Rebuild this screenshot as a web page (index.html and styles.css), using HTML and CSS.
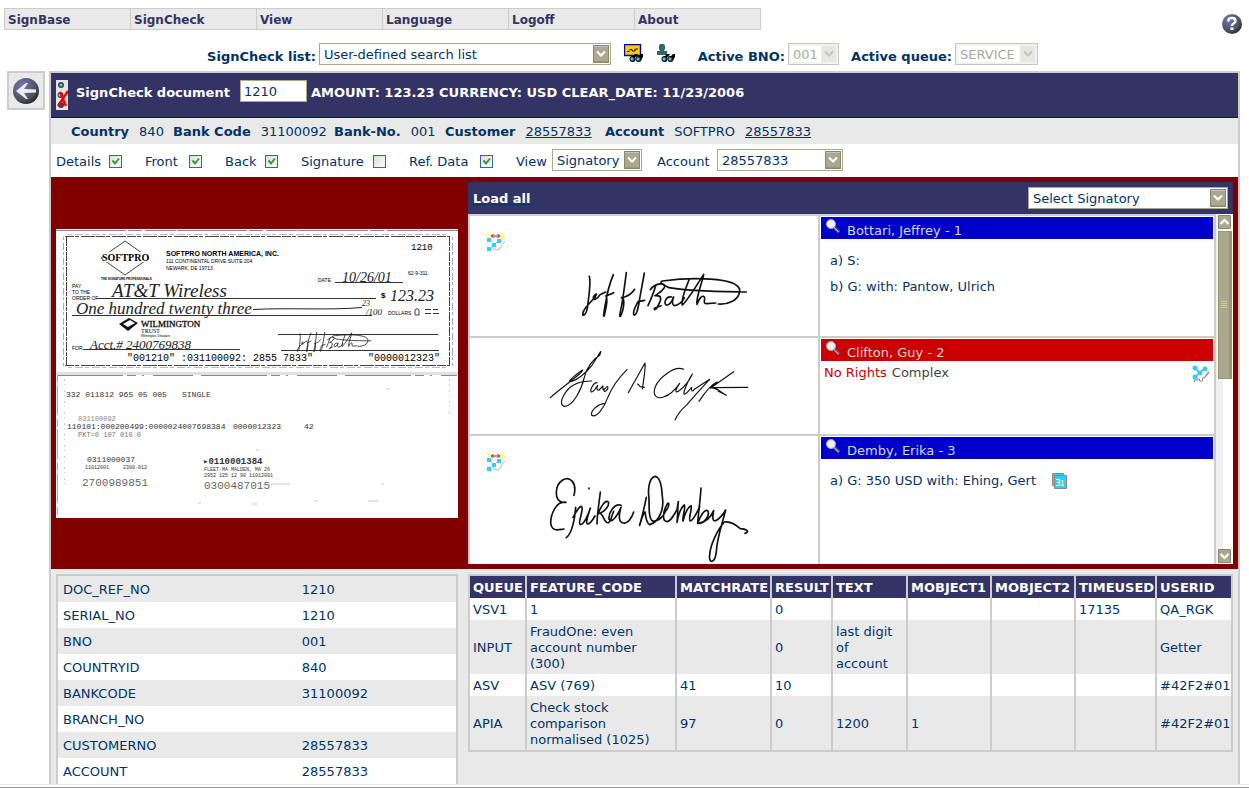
FILE: index.html
```html
<!DOCTYPE html>
<html lang="en">
<head>
<meta charset="utf-8">
<title>SignCheck document</title>
<link rel="stylesheet" href="styles.css">
</head>
<body>
<svg class="defs" width="0" height="0" aria-hidden="true">
  <defs>
    <radialGradient id="ball" cx="35%" cy="30%" r="75%"><stop offset="0" stop-color="#7478ac"/><stop offset=".5" stop-color="#5a5c80"/><stop offset=".75" stop-color="#4d4f54"/><stop offset="1" stop-color="#22242a"/></radialGradient>
    <symbol id="glasses" viewBox="0 0 14 8">
      <path d="M3 3 6 0h3l-2 3zM9 3l3-3h2v3l-2 3z" fill="#000"/><circle cx="3.500" cy="5" r="3" fill="#000"/><circle cx="9.500" cy="5" r="3" fill="#000"/><circle cx="3" cy="5" r="1.700" fill="#3cf"/><circle cx="9" cy="5" r="1.700" fill="#3cf"/>
    </symbol>
    <symbol id="nodes" viewBox="0 0 18 18">
      <path d="M3 3 8 8M12 4 3 12M13 12l4-5" stroke="#888" stroke-width="1.300" fill="none"/>
      <path d="M2.500 17v-2h3v-1h2v2h3v-3h2v-1" stroke="#888" fill="none"/>
      <circle cx="3" cy="3" r="2.500" fill="#3cf"/><circle cx="13" cy="4" r="2.500" fill="#3cf"/><circle cx="8" cy="8" r="2.500" fill="#3cf"/><circle cx="3" cy="12" r="2.500" fill="#3cf"/>
    </symbol>
    <symbol id="compare" viewBox="0 0 20 20">
      <circle cx="3" cy="3" r="2.500" fill="#ff9"/><circle cx="16" cy="3" r="2.500" fill="#ff9"/><path d="M1 4h5v3H1zM14 4h5v3h-5z" fill="#ff9"/>
      <path d="M5 4h9M7.500 2 5.500 4l2 2M11.500 2l2 2-2 2" stroke="#c03" fill="none"/>
      <path d="M3 8l5 5 5-5M8 13l-5 4" stroke="#bbb" fill="none"/><path d="M7 18v-1h3v1h3v-2h2v-2l4-5" stroke="#bbb" fill="none"/>
      <path d="M1 6h4v4H1zM11 7h4v4h-4zM6 11h4v4H6zM1 15h4v4H1z" fill="#3cf"/>
    </symbol>
    <symbol id="lens" viewBox="0 0 16 14">
      <path d="M9 8l5 5" stroke="#99a" stroke-width="2.500"/><path d="M10 8l5 5" stroke="#446" stroke-width="1"/><circle cx="6" cy="5" r="4.500" fill="#eee" stroke="#aab" stroke-width="1"/>
    </symbol>
    <symbol id="jeff" viewBox="240 265 624 159">
      <g fill="none" stroke="#111" stroke-width="5" stroke-linecap="round" stroke-linejoin="round">
        <path d="M373 290c6 22-3 68-6 96-6 25-18 26-12 10 8-18 27-32 36-45 9-14-3-7-6 2-3 11 12 7 20-8l17-8M445 285c-8 20-18 52-22 78-5 26-10 56-5 44 4-18 12-46 6-56-6-6 14-4 22-12M484 279c-4 30-9 70-14 98-6 28-8 40-2 30 8-16 10-40 7-50l-6-3c22-2 34-16 40-25M538 280c-5 30-12 62-16 90-5 28-10 38-15 36-6-8 4-24 12-40l20-4"/>
        <path d="M572 318c-6 22-14 40-23 60M556 330c16-22 50-22 42-6-8 14-20 18-28 24 24-2 18 14 10 28-4 14-14 18-12 10l20-8M620 352c-20-4-24 22-16 24 10 2 18-14 22-24-6 14-4 24 2 26 10 0 26-12 30-24M672 300c-8 24-26 60-20 76 10-8 34-44 64-92-4 24-24 70-20 90 6-16 16-30 22-22 4 8-6 18 6 20l28-2"/>
        <path d="M760 373c28 2 64-10 64-42-6-40-150-38-232-27-12 4 4 12 20 20 60 12 168 12 232 13"/>
      </g>
    </symbol>
  </defs>
</svg>

<header class="top">
  <nav class="menu">
    <a href="#">SignBase</a><a href="#">SignCheck</a><a href="#">View</a><a href="#">Language</a><a href="#">Logoff</a><a href="#">About</a>
  </nav>
  <button class="plain help" aria-label="Help">
    <svg width="22" height="22" viewBox="0 0 22 22"><circle cx="11" cy="11" r="10" fill="url(#ball)"/><path d="M7.500 8.500V7q0-2 3.500-2t3.500 3q0 1.500-2 2.500-1.500.7-1.500 2.500" fill="none" stroke="#fff" stroke-width="2.400"/><path d="M9.500 14.500h3V17h-3z" fill="#fff"/></svg>
  </button>
</header>

<div class="filters">
  <label class="strong list-label" for="list">SignCheck list:</label>
  <select id="list" class="w-list"><option>User-defined search list</option></select>
  <div class="tools">
    <button class="plain" aria-label="Find signature"><svg width="20" height="18" viewBox="0 0 20 18"><path d="M.500.500h16v11H.500z" fill="#fc0" stroke="#009" stroke-width="1.400"/><path d="M3 7.500h2l1-2h2v1.500h3v-2h3" fill="none" stroke="#009"/><use href="#glasses" x="5" y="10" width="14" height="8"/></svg></button>
    <button class="plain" aria-label="Find customer"><svg width="20" height="20" viewBox="0 0 20 20"><path d="M4 1h4q2 2 1 5l-1 2h3v4H1V8h3L3 6q-1-3 1-5z" fill="#366"/><use href="#glasses" x="5" y="11" width="14" height="8"/></svg></button>
  </div>
  <label class="strong bno-label" for="bno">Active BNO:</label>
  <select id="bno" class="w-bno" disabled><option>001</option></select>
  <label class="strong queue-label" for="queue">Active queue:</label>
  <select id="queue" class="w-queue" disabled><option>SERVICE</option></select>
</div>

<div class="stage">
  <button class="back" aria-label="Back">
    <svg width="28" height="28" viewBox="0 0 28 28"><circle cx="14" cy="14" r="13" fill="url(#ball)"/><path d="M4 14l10-8h2l-4 6 12 .5v3L12 16l4 6h-2z" fill="#eee"/></svg>
  </button>

  <main class="panel">
    <div class="titlebar">
      <svg width="12" height="30" viewBox="0 0 12 30"><path d="M0 0h12v30H0z" fill="#e4e4e4"/><circle cx="5" cy="5" r="3" fill="#345"/><circle cx="5" cy="5" r="1.500" fill="#6c9"/><circle cx="4.500" cy="15" r="3" fill="#345"/><circle cx="4" cy="15" r="1.500" fill="#fc3"/><circle cx="5" cy="25" r="3" fill="#345"/><path d="M4 12l6 14M12 11 2 26" stroke="#f00" stroke-width="2.500"/></svg>
      <label class="doc-label" for="doc">SignCheck document</label>
      <input id="doc" class="doc" type="text" value="1210">
      <span>AMOUNT: 123.23 CURRENCY: USD CLEAR_DATE: 11/23/2006</span>
    </div>

    <dl class="info">
      <div class="i-country"><dt>Country</dt><dd>840</dd></div>
      <div class="i-code"><dt>Bank Code</dt><dd>31100092</dd></div>
      <div class="i-no"><dt>Bank-No.</dt><dd>001</dd></div>
      <div class="i-cust"><dt>Customer</dt><dd><a href="#">28557833</a></dd></div>
      <div><dt>Account</dt><dd>SOFTPRO</dd><dd><a href="#">28557833</a></dd></div>
    </dl>

    <form class="options">
      <label class="o-details">Details <input type="checkbox" checked></label>
      <label class="o-front">Front <input type="checkbox" checked></label>
      <label class="o-back">Back <input type="checkbox" checked></label>
      <label class="o-sig">Signature <input type="checkbox"></label>
      <label class="o-ref">Ref. Data <input type="checkbox" checked></label>
      <label class="o-view">View <select class="w-view"><option>Signatory</option></select></label>
      <label class="o-acc">Account <select class="w-acc"><option>28557833</option></select></label>
    </form>

    <section class="compare">
      <svg class="check" viewBox="0 0 402 289" role="img" aria-label="Check front and back">
        <path d="M0 0h402v289H0z" fill="#fefefe"/>
        <path d="M0 1.500h402" stroke="#888" stroke-dasharray="70 2 14 3 31 1"/>
        <g fill="none" stroke="#444">
          <path d="M9 7.500h385M9 136.500h385" stroke-dasharray="9 1 4 2 14 1"/><path d="M12 5.500h380M12 138.500h380" stroke="#bbb" stroke-dasharray="4 3 8 2"/>
          <path d="M10.500 8v129M393.500 8v129" stroke-dasharray="9 1 4 1"/><path d="M7.500 8v129M396.500 8v129" stroke="#aaa" stroke-dasharray="3 3 7 2"/>
          <path d="M69 12 93 29 69 46 45 29z"/>
        </g>
        <path d="M47 23h44v10H47z" fill="#fefefe"/>
        <g class="serif bold"><text x="46" y="32" font-size="10">SOFTPRO</text></g>
        <g class="serif"><text x="85" y="98" font-size="9" stroke="#111" stroke-width=".3">WILMINGTON</text><text x="85" y="104" font-size="6">TRUST</text></g>
        <g class="sans">
          <text class="bold" x="110" y="27" font-size="7">SOFTPRO NORTH AMERICA, INC.</text>
          <text x="110" y="34" font-size="5">111 CONTINENTAL DRIVE SUITE 204</text>
          <text x="110" y="41" font-size="5">NEWARK, DE 19713</text>
          <text class="bold" x="45" y="51" font-size="3">THE SIGNATURE PROFESSIONALS</text>
          <text x="262" y="53" font-size="5">DATE</text><text x="352" y="46" font-size="5">62-9-311</text>
          <text x="16" y="59" font-size="5">PAY</text><text x="16" y="65" font-size="5">TO THE</text><text x="16" y="71" font-size="5">ORDER OF</text>
          <text class="bold" x="325" y="69" font-size="8">$</text><text x="332" y="86" font-size="5">DOLLARS</text>
          <text x="85" y="108" font-size="3">Wilmington, Delaware</text><text x="16" y="121" font-size="5">FOR</text>
        </g>
        <g class="hand">
          <text x="286" y="53" font-size="14">10/26/01</text><text x="56" y="68" font-size="19">AT&amp;T Wireless</text>
          <text x="334" y="72" font-size="16">123.23</text><text x="20" y="85" font-size="17">One hundred twenty three</text>
          <text x="306" y="77" font-size="8">23</text><text x="310" y="86" font-size="9">/100</text>
          <text x="34" y="120" font-size="13">Acct.# 2400769838</text>
        </g>
        <path d="M279 53.500h68M40 69.500h280M16 86.500h300M27 120.500h157M222 105.500h160M225 121.500h158M369 80.500h6M377 80.500h5M369 84.500h6M377 84.500h6" stroke="#333"/>
        <path d="M197 80.500c35-2 75 1 109-2" stroke="#222" fill="none"/>
        <path d="M359 86v-5q2-3 4 0v5z" fill="none" stroke="#444"/>
        <path d="M63 95l10-6 9 5-10 8z" fill="#111"/><path d="M67 95l7-4 5 3-7 4z" fill="#fff"/>
        <use href="#jeff" x="224" y="101" width="94" height="24"/>
        <g class="mono"><text x="355" y="21" font-size="9">1210</text><text x="71" y="132" font-size="10">"001210" :031100092: 2855 7833"</text><text x="312" y="132" font-size="10">"0000012323"</text></g>
        <path d="M0 144.500h402" stroke="#e0e0e0" stroke-width="3"/><path d="M1 146.500h400" stroke="#888" stroke-dasharray="66 4 9 6 2 9 40 8"/><path d="M1.500 146v142" stroke="#aaa" stroke-dasharray="8 2 30 4"/><path d="M8.500 150v110M393.500 150v38" stroke="#ccc" stroke-dasharray="2 3 1 5"/>
        <g class="mono" fill="#333">
          <text x="10" y="168" font-size="8">332 011812 965 05 005</text><text x="126" y="168" font-size="8">SINGLE</text>
          <text x="22" y="192" font-size="7" fill="#888">031100092</text><text x="22" y="208" font-size="7" fill="#777">PKT=0 107 010 0</text>
          <text x="11" y="200" font-size="8">110101:000200499:0000024007698384</text><text x="177" y="200" font-size="8">0000012323</text><text x="248" y="200" font-size="8">42</text>
          <text x="31" y="233" font-size="8">0311000037</text><text x="29" y="240" font-size="5">11012001</text><text x="67" y="240" font-size="5">2380-012</text>
          <text x="26" y="257" font-size="11" fill="#666">2700989851</text>
          <text class="bold" x="147" y="235" font-size="9">▸0110001384</text><text x="148" y="242" font-size="5">FLEET-MA MALDEN, MA 26</text><text x="148" y="248" font-size="5">2952 125 12 90 11012001</text>
          <text x="148" y="260" font-size="11" fill="#666">0300487015</text>
        </g>
        <path d="M200 221h3M212 255h22M142 274h3M196 275h5M258 272h4M312 272h11M330 160h4M325 255h3" stroke="#ccc"/>
      </svg>

      <div class="signatories">
        <div class="sig-head">
          <a href="#">Load all</a>
          <select class="w-sel" aria-label="Select Signatory"><option>Select Signatory</option></select>
        </div>
        <div class="sig-body">
          <ul class="sig-list">
            <li class="r1">
              <div class="sig"><svg class="cmp"><use href="#compare"/></svg><svg class="ink" width="208" height="53" role="img" aria-label="Signature of Jeffrey Bottari"><use href="#jeff"/></svg></div>
              <div class="who"><h2><svg class="lens"><use href="#lens"/></svg>Bottari, Jeffrey - 1</h2><p class="rule">a) S:</p><p class="rule">b) G: with: Pantow, Ulrich</p></div>
            </li>
            <li class="r2">
              <div class="sig"><span class="cmp"></span><svg class="ink" width="208" height="71" viewBox="240 510 624 213" role="img" aria-label="Signature of Guy Clifton"><g fill="none" stroke="#111" stroke-width="3.500" stroke-linecap="round" stroke-linejoin="round">
                <path d="M256 653c20-18 50-40 84-68 12-10 18-20 8-12-14 10-44 34-32 32 18-4 46-24 64-48 20-28 34-60 24-31-18 10-40 36-46 66-8 34-34 90-62 87-20-12 10-54 30-64 20-12 40-12 54-12"/>
                <path d="M396 608c-12 0-24 28-16 28 8-2 14-14 18-20-4 10-2 16 4 14l12-12c-2 10 0 14 6 8 8-10 10-8 8 2M428 626c-6 12-14 10-10 0M486 569c-30 30-46 54-58 84-10 30-34 62-48 53-4-14 18-34 40-36"/>
                <path d="M490 638c14-26 34-60 50-89 2 20-4 50-8 78M518 612l8 8 12 2M656 568c-30-14-76 30-84 50-14 32 8 40 26 32 20-6 36-26 46-40-12 16-16 30-4 24 20-12 36-38 42-52-10 14-34 66-22 60 6-2 12-12 20-20-2 12 2 14 8 6l46-30c-30 32-50 54-68 76-16 14-28 28-36 46"/>
                <path d="M806 575l-68 48 110-1M702 664c20-30 40-52 54-58l-20 18c16-4 24 8 48 22l-24-12"/></g></svg></div>
              <div class="who red"><h2><svg class="lens"><use href="#lens"/></svg>Clifton, Guy - 2</h2><p class="note"><span class="deny">No Rights</span> <span>Complex</span><svg class="nodes"><use href="#nodes"/></svg></p></div>
            </li>
            <li class="r3">
              <div class="sig"><svg class="cmp"><use href="#compare"/></svg><svg class="ink" width="208" height="91" viewBox="240 879 624 273" role="img" aria-label="Signature of Erika Demby"><g fill="none" stroke="#111" stroke-width="5" stroke-linecap="round" stroke-linejoin="round">
                <path d="M327 946c10-40-14-58-34-46-24 16-26 60-2 66l12 1c-30-6-46 38-46 62 4 28 24 20 40 18"/>
                <path d="M332 982c-2 30-10 78-28 91M324 1012c12-22 22-36 26-32 8 8-14 50-4 54 12 0 26-36 30-50-6 20-16 46-8 48 8 0 16-14 22-24M372 924v2M406 936c-4 36-10 68-10 96M398 1004c10-26 24-46 32-38 4 10-10 28-26 34 10-2 14 32 26 28 8-4 10-22 16-34M468 976c-20-8-38 24-36 42 10 14 28-16 36-36-8 26-6 44 4 46 14 6 28-12 34-32"/>
                <path d="M544 952c-6 30-14 62-20 84 6-20 10-36 16-40 2 16 4 34 14 38 30-8 44-50 38-84-2-40-8-60-22-61-18 4-22 40-18 66 0 34 0 60 10 68 16 4 34-14 40-30 14-18 10-30 4-20-12 22-16 50 0 52 10 0 20-18 30-36l4-24c-2 20-2 40-4 62 4-22 12-44 22-52 4 14-6 32-4 48 6-22 14-42 24-46 4 14-10 42-2 46 8 0 20-26 28-42"/>
                <path d="M708 924c-2 36-8 76-10 106 8-22 20-44 30-38 8 12-10 40-28 38 20-2 38-18 46-38-4 20-4 32 6 30 12-6 22-18 30-32-10 40-26 84-28 124-4 38-24 38-20 10 2-30 24-76 44-98 20-4 36 10 48 20 22 2 28 10 14 14"/></g></svg></div>
              <div class="who"><h2><svg class="lens"><use href="#lens"/></svg>Demby, Erika - 3</h2><p class="rule">a) G: 350 USD with: Ehing, Gert <svg class="cal" viewBox="0 0 16 16"><path d="M.500 13V.500H12" fill="none" stroke="#888"/><path d="M1 1h11v3H4v9H1z" fill="#3cf"/><path d="M2.500 2.500h12v13h-12z" fill="#3cf" stroke="#888"/><path d="M4 6.500h3.500v6H4M5 9.500h2M9 7.500h1.500v5M9 12.500h3" fill="none" stroke="#ff9" stroke-width="1.200"/></svg></p></div>
            </li>
          </ul>
          <div class="scroll">
            <button class="plain" aria-label="Scroll up"><svg width="15" height="16" viewBox="0 0 15 16"><path d="M1.500 1.500h12v13h-12z" fill="#aca890" stroke="#887"/><path d="M3.500 10l4-4 4 4" fill="none" stroke="#fff" stroke-width="2"/></svg></button>
            <div class="thumb"><i></i></div>
            <button class="plain down" aria-label="Scroll down"><svg width="15" height="16" viewBox="0 0 15 16"><path d="M1.500 1.500h12v13h-12z" fill="#aca890" stroke="#887"/><path d="M3.500 6l4 4 4-4" fill="none" stroke="#fff" stroke-width="2"/></svg></button>
          </div>
        </div>
      </div>
    </section>

    <section class="data">
      <table class="details">
        <tr><th>DOC_REF_NO</th><td>1210</td></tr>
        <tr><th>SERIAL_NO</th><td>1210</td></tr>
        <tr><th>BNO</th><td>001</td></tr>
        <tr><th>COUNTRYID</th><td>840</td></tr>
        <tr><th>BANKCODE</th><td>31100092</td></tr>
        <tr><th>BRANCH_NO</th><td></td></tr>
        <tr><th>CUSTOMERNO</th><td>28557833</td></tr>
        <tr><th>ACCOUNT</th><td>28557833</td></tr>
      </table>
      <table class="results">
        <colgroup><col class="c1"><col class="c2"><col class="c3"><col class="c4"><col class="c5"><col class="c6"><col class="c6"><col class="c8"><col class="c9"></colgroup>
        <thead><tr><th>QUEUE</th><th>FEATURE_CODE</th><th>MATCHRATE</th><th>RESULT</th><th>TEXT</th><th>MOBJECT1</th><th>MOBJECT2</th><th>TIMEUSED</th><th>USERID</th></tr></thead>
        <tbody>
        <tr><td>VSV1</td><td>1</td><td></td><td>0</td><td></td><td></td><td></td><td>17135</td><td>QA_RGK</td></tr>
        <tr><td>INPUT</td><td>FraudOne: even account number (300)</td><td></td><td>0</td><td>last digit of account</td><td></td><td></td><td></td><td>Getter</td></tr>
        <tr><td>ASV</td><td>ASV (769)</td><td>41</td><td>10</td><td></td><td></td><td></td><td></td><td>#42F2#01</td></tr>
        <tr><td>APIA</td><td>Check stock comparison normalised (1025)</td><td>97</td><td>0</td><td>1200</td><td>1</td><td></td><td></td><td>#42F2#01</td></tr>
        </tbody>
      </table>
    </section>
  </main>
</div>
<div class="edge"></div>
</body>
</html>
```
FILE: styles.css
```css
* { box-sizing: border-box; }
body { margin: 0; background: #fff; color: #003366; font: 13px/16px Verdana, "DejaVu Sans", sans-serif; }
a { color: inherit; }
h2, p, ul, dl, dd { margin: 0; padding: 0; font-weight: normal; }
.defs { position: absolute; }
svg { display: block; flex: none; }
.plain { border: 0; padding: 0; background: none; }

.top { display: flex; justify-content: space-between; padding: 8px 6px 0 4px; height: 43px; }
.menu { display: flex; height: 22px; border: 1px solid #ccc; background: #e9e9e9; }
.menu a { width: 126px; padding: 3px; border-left: 1px solid #ccc; color: #333366; font-size: 12px; font-weight: bold; line-height: 16px; text-decoration: none; }
.menu a:first-child { width: 125px; border-left: 0; }
.help { margin-top: 5px; height: 22px; }

select { appearance: none; height: 22px; margin: 0; padding: 1px 20px 0 4px; border: 1px solid #aca888; border-radius: 0; color: #003366; font: inherit; font-weight: normal; line-height: 16px;
  background: #fff url("data:image/svg+xml,%3Csvg xmlns='http://www.w3.org/2000/svg' width='16' height='18'%3E%3Crect x='.5' y='.5' width='15' height='17' fill='%23aca890' stroke='%23888870'/%3E%3Cpath d='M1 1.500h14' stroke='%23b4ccb4'/%3E%3Cpath d='M1 16.500h14' stroke='%23999966'/%3E%3Cpath d='M4 6.500l4 4 4-4' fill='none' stroke='%23fff' stroke-width='2'/%3E%3C/svg%3E") no-repeat right 1px top 1px; }
select:disabled { border-color: #c8c8c0; color: #aca899; opacity: 1;
  background-image: url("data:image/svg+xml,%3Csvg xmlns='http://www.w3.org/2000/svg' width='16' height='18'%3E%3Crect width='16' height='18' rx='1' fill='%23e6e6e2'/%3E%3Cpath d='M4 6.500l4 4 4-4' fill='none' stroke='%23c4c4bc' stroke-width='2'/%3E%3C/svg%3E"); box-shadow: inset 0 0 0 2px #f2f2f0; }
.w-list { width: 292px; }
.w-bno { width: 51px; }
.w-queue { width: 83px; }
.w-view { width: 90px; }
.w-acc { width: 126px; }
.w-sel { width: 200px; }

.filters { display: flex; align-items: flex-start; height: 28px; }
.strong { padding-top: 6px; font-weight: bold; text-align: right; white-space: nowrap; }
.list-label { width: 319px; padding-right: 3px; }
.tools { display: flex; gap: 12px; width: 76px; padding-left: 13px; }
.bno-label { width: 101px; padding-right: 3px; }
.queue-label { width: 116px; padding-right: 3px; }

.stage { display: flex; align-items: flex-start; gap: 4px; padding: 0 9px 0 7px; }
.back { width: 38px; height: 39px; padding: 0 0 0 3px; border: 2px solid #ccc; background: #e9e9e9; }
.panel { flex: 1; min-width: 0; border: 2px solid #ccc; border-bottom: 0; background: #e9e9e9; }

.titlebar { display: flex; height: 45px; padding: 7px 0 0 5px; border-bottom: 1px solid #0000cc; background: #333366; color: #fff; font-weight: bold; line-height: 24px; }
.doc-label { width: 164px; margin-left: 8px; }
.titlebar > span { margin-left: 4px; }
.titlebar span, .doc-label { padding-top: 1px; white-space: nowrap; }
.doc { width: 67px; height: 22px; margin: 0; padding: 1px 3px 0; border: 1px solid #aca888; color: #003366; font: inherit; font-weight: normal; }

.info { display: flex; height: 26px; padding: 6px 0 0 20px; white-space: nowrap; }
.info div { display: flex; gap: 10px; }
.info dt { font-weight: bold; }
.i-country { width: 102px; }
.i-code { width: 161px; }
.i-no { width: 111px; }
.i-cust { width: 160px; }

.options { display: flex; height: 33px; padding: 6px 0 0 5px; background: #fff; white-space: nowrap; }
.options label { display: flex; gap: 5px; align-items: flex-start; justify-content: space-between; line-height: 24px; }
.options input { appearance: none; width: 13px; height: 13px; margin: 5px 0 0; border: 1px solid #336699; background: linear-gradient(135deg, #dcdcd8, #fff); }
.options input:checked { background: url("data:image/svg+xml,%3Csvg xmlns='http://www.w3.org/2000/svg' width='11' height='11'%3E%3Cpath d='M2.500 4.500l2.500 3 4-5' fill='none' stroke='%23339933' stroke-width='2'/%3E%3C/svg%3E"), linear-gradient(135deg, #dcdcd8, #fff); }
.o-details { width: 66px; margin-right: 23px; }
.o-front { width: 57px; margin-right: 23px; }
.o-back { width: 53px; margin-right: 23px; }
.o-sig { width: 85px; margin-right: 23px; }
.o-ref { width: 84px; margin-right: 23px; }
.o-view { width: 126px; margin-right: 15px; }
.o-acc { width: 186px; }
.options select { margin-top: -1px; }

.compare, .data { display: grid; grid-template-columns: 402px minmax(0, 1fr); gap: 10px; padding: 5px; }
.compare { align-items: center; background: #800000; }
.check { width: 402px; height: 289px; }
.serif { font-family: "Liberation Serif", serif; }
.sans { font-family: "Liberation Sans", sans-serif; }
.mono { font-family: "Liberation Mono", monospace; }
.hand { font-family: "Liberation Serif", serif; font-style: italic; fill: #222; }
.bold { font-weight: bold; }

.sig-head { display: flex; justify-content: space-between; height: 32px; padding: 5px; background: #333366; color: #fff; font-weight: bold; line-height: 24px; }
.sig-head a { text-decoration-color: #003366; }
.sig-body { display: flex; background: #fff; }
.sig-list { display: grid; flex: 1; gap: 2px; padding: 2px 2px 0; background: #ccc; list-style: none; }
.sig-list li { display: grid; grid-template-columns: 348px 1fr; gap: 2px; }
.r1 { min-height: 120px; }
.r2 { min-height: 96px; }
.r3 { min-height: 128px; }
.sig { display: flex; padding-left: 16px; background: #fff; }
.cmp { width: 20px; height: 20px; margin: 16px 39px 0 0; }
.r1 .ink { margin-top: 52px; }
.r2 .ink { margin-top: 12px; }
.r3 .ink { margin-top: 37px; }
.who { padding: 1px; background: #fff; }
.who h2 { display: flex; height: 22px; padding: 2px 4px; background: #0000cc; color: #d8d8d8; font-size: 13px; line-height: 24px; }
.who.red h2 { background: #cc0000; }
.lens { width: 16px; height: 14px; margin-right: 6px; }
.rule { display: flex; gap: 16px; padding: 5px 9px; }
h2 + .rule { padding-top: 14px; }
.cal { width: 16px; height: 16px; }
.note { display: flex; gap: 5px; padding: 4px 3px; color: #444; }
.deny { color: #cc0000; }
.nodes { width: 18px; height: 18px; margin-left: auto; }
.scroll { display: flex; flex-direction: column; align-items: center; width: 17px; background: linear-gradient(90deg, #f0f0f0 7px, #fff 7px); }
.scroll button { height: 16px; }
.thumb { display: flex; align-items: center; justify-content: center; width: 14px; height: 148px; margin-top: 1px; border: 1px solid #999966; border-right: 3px solid #999966; background: #aca890; }
.thumb i { width: 6px; height: 8px; background: repeating-linear-gradient(#cc9 0 1px, #aca890 1px 2px); }
.down { margin-top: auto; }

.data { align-items: start; padding-bottom: 0; }
table { width: 100%; border-collapse: collapse; table-layout: fixed; }
th { text-align: left; }
.details { border: 2px solid #ccc; border-bottom: 0; border-collapse: separate; border-spacing: 0; }
.details th, .details td { height: 26px; padding: 5px 5px 3px; font-weight: normal; }
.details th { width: 60%; }
.details tr:nth-child(even), .results tbody tr:nth-child(odd) { background: #fff; }
.results { border: 2px solid #ccc; }
.results th, .results td { padding: 4px 3px 2px; border-right: 2px solid #ccc; border-left: 2px solid #ccc; }
.results th { background: #333366; color: #fff; white-space: nowrap; }
.c1 { width: 57px; }
.c2 { width: 150px; }
.c3 { width: 95px; }
.c4 { width: 61px; }
.c5 { width: 75px; }
.c6 { width: 84px; }
.c8 { width: 81px; }
.c9 { width: 76px; }
.edge { height: 4px; border-top: 1px solid #e9e9e9; border-bottom: 1px solid #999; }
```
